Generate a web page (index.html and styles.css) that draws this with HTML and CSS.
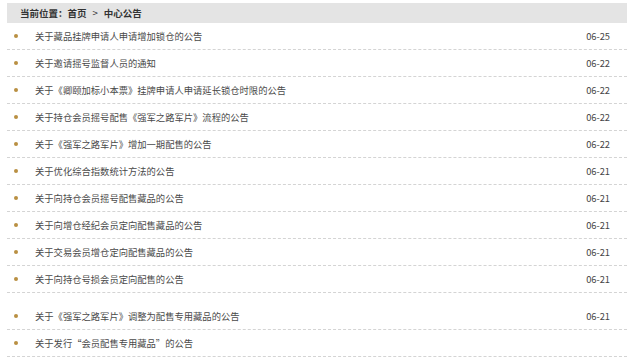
FILE: index.html
```html
<!DOCTYPE html>
<html lang="zh-CN">

<head>
  <meta charset="UTF-8" />
  <meta name="viewport" content="width=device-width, initial-scale=1.0" />
  <title>中心公告</title>
  <link rel="stylesheet" href="styles.css">
</head>

<body>
  <div class="wrap">
    <div class="crumb">当前位置：首页<span class="sep">&gt;</span>中心公告</div>
    <ul class="news">
      <li><span class="dot"></span><span class="title">关于藏品挂牌申请人申请增加锁仓的公告</span><span class="date">06-25</span></li>
      <li><span class="dot"></span><span class="title">关于邀请摇号监督人员的通知</span><span class="date">06-22</span></li>
      <li><span class="dot"></span><span class="title">关于《卿颐加标小本票》挂牌申请人申请延长锁仓时限的公告</span><span class="date">06-22</span></li>
      <li><span class="dot"></span><span class="title">关于持仓会员摇号配售《强军之路军片》流程的公告</span><span class="date">06-22</span></li>
      <li><span class="dot"></span><span class="title">关于《强军之路军片》增加一期配售的公告</span><span class="date">06-22</span></li>
      <li><span class="dot"></span><span class="title">关于优化综合指数统计方法的公告</span><span class="date">06-21</span></li>
      <li><span class="dot"></span><span class="title">关于向持仓会员摇号配售藏品的公告</span><span class="date">06-21</span></li>
      <li><span class="dot"></span><span class="title">关于向增仓经纪会员定向配售藏品的公告</span><span class="date">06-21</span></li>
      <li><span class="dot"></span><span class="title">关于交易会员增仓定向配售藏品的公告</span><span class="date">06-21</span></li>
      <li><span class="dot"></span><span class="title">关于向持仓号损会员定向配售的公告</span><span class="date">06-21</span></li>
      <li class="gap"><span class="dot"></span><span class="title">关于《强军之路军片》调整为配售专用藏品的公告</span><span class="date">06-21</span></li>
      <li><span class="dot"></span><span class="title">关于发行“会员配售专用藏品”的公告</span><span class="date"></span></li>
    </ul>
  </div>
</body>

</html>
```

FILE: styles.css
```css
body {
  margin: 0;
  background: #fff;
  font-family: "Noto Sans CJK SC", "Liberation Sans", sans-serif;
  color: #444;
}

.wrap {
  width: 620px;
  margin: 3px 0 0 7px;
}

.crumb {
  height: 20px;
  line-height: 20px;
  padding-left: 13px;
  background: #e4e4e4;
  font-size: 9.5px;
  font-weight: bold;
  color: #333;
}

.crumb .sep {
  margin: 0 6px;
  font-weight: normal;
}

.news {
  list-style: none;
  margin: 0;
  padding: 0;
}

.news li {
  height: 26px;
  display: flex;
  align-items: center;
  padding: 0 17px 0 7px;
  border-bottom: 1px dashed #d4d4d4;
  font-size: 9.3px;
}

.news li.gap {
  margin-top: 10px;
}

.dot {
  width: 4px;
  height: 4px;
  border-radius: 50%;
  background: #b98f42;
  margin-right: 17px;
}

.title {
  flex: 1;
  color: #4a4a4a;
}

.date {
  color: #444;
}
```
